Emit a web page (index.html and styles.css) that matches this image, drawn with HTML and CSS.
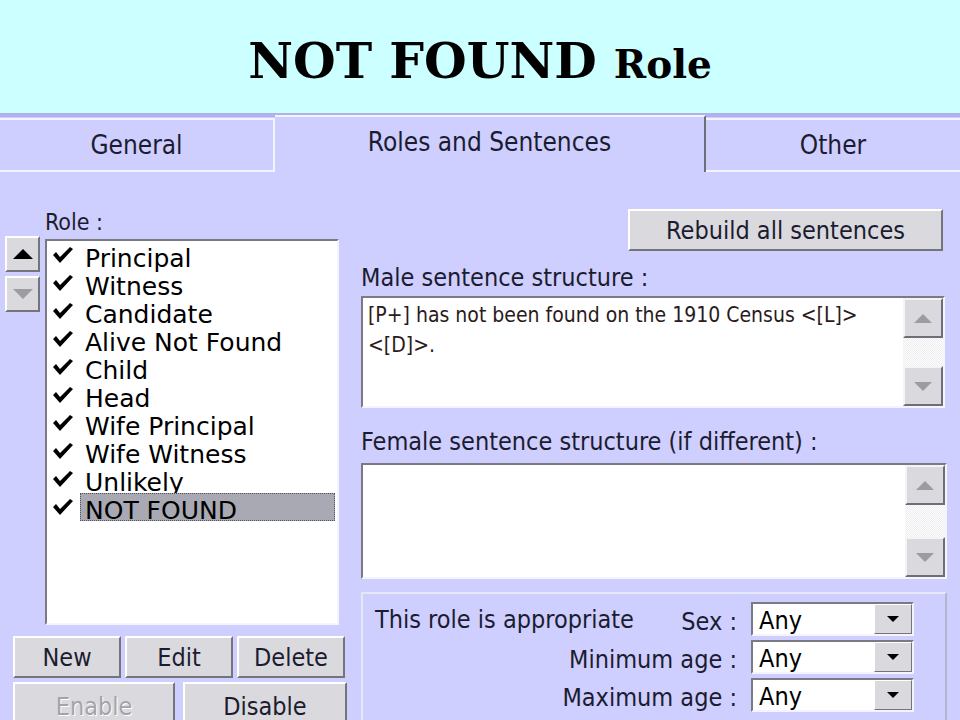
FILE: index.html
```html
<!DOCTYPE html>
<html lang="en">
<head>
  <meta charset="UTF-8" />
  <title>NOT FOUND Role</title>
  <link rel="stylesheet" href="styles.css">
</head>
<body>
  <header class="title-band">
    <h1>NOT FOUND <span class="title-small">Role</span></h1>
  </header>

  <nav class="tabs">
    <div class="tab">General</div>
    <div class="tab active">Roles and Sentences</div>
    <div class="tab last">Other</div>
  </nav>

  <main class="panel">
    <section class="roles">
      <div class="field-label role-label">Role :</div>
      <div class="roles-row">
        <div class="move-btns">
          <button class="win-btn move"><span class="tri tri-up"></span></button>
          <button class="win-btn move" disabled><span class="tri tri-down dim"></span></button>
        </div>
        <ul class="listbox">
          <li><svg class="check" viewBox="0 0 20 16"><polygon points="0,8 3,5 7,10 17,0 20,2 7,16"/></svg><span>Principal</span></li>
          <li><svg class="check" viewBox="0 0 20 16"><polygon points="0,8 3,5 7,10 17,0 20,2 7,16"/></svg><span>Witness</span></li>
          <li><svg class="check" viewBox="0 0 20 16"><polygon points="0,8 3,5 7,10 17,0 20,2 7,16"/></svg><span>Candidate</span></li>
          <li><svg class="check" viewBox="0 0 20 16"><polygon points="0,8 3,5 7,10 17,0 20,2 7,16"/></svg><span>Alive Not Found</span></li>
          <li><svg class="check" viewBox="0 0 20 16"><polygon points="0,8 3,5 7,10 17,0 20,2 7,16"/></svg><span>Child</span></li>
          <li><svg class="check" viewBox="0 0 20 16"><polygon points="0,8 3,5 7,10 17,0 20,2 7,16"/></svg><span>Head</span></li>
          <li><svg class="check" viewBox="0 0 20 16"><polygon points="0,8 3,5 7,10 17,0 20,2 7,16"/></svg><span>Wife Principal</span></li>
          <li><svg class="check" viewBox="0 0 20 16"><polygon points="0,8 3,5 7,10 17,0 20,2 7,16"/></svg><span>Wife Witness</span></li>
          <li><svg class="check" viewBox="0 0 20 16"><polygon points="0,8 3,5 7,10 17,0 20,2 7,16"/></svg><span>Unlikely</span></li>
          <li class="selected"><svg class="check" viewBox="0 0 20 16"><polygon points="0,8 3,5 7,10 17,0 20,2 7,16"/></svg><span>NOT FOUND</span></li>
        </ul>
      </div>
      <div class="btn-row three">
        <button class="win-btn">New</button>
        <button class="win-btn">Edit</button>
        <button class="win-btn">Delete</button>
      </div>
      <div class="btn-row two">
        <button class="win-btn" disabled>Enable</button>
        <button class="win-btn">Disable</button>
      </div>
    </section>

    <section class="sentences">
      <div class="rebuild-row">
        <button class="win-btn rebuild">Rebuild all sentences</button>
      </div>

      <div class="field-label male-label">Male sentence structure :</div>
      <div class="textbox male">
        <div class="textbox-text">[P+] has not been found on the 1910 Census &lt;[L]&gt;<br>&lt;[D]&gt;.</div>
        <div class="vscroll">
          <div class="scroll-btn"><span class="tri tri-up small dim"></span></div>
          <div class="scroll-track"></div>
          <div class="scroll-btn"><span class="tri tri-down small dim"></span></div>
        </div>
      </div>

      <div class="field-label female-label">Female sentence structure (if different) :</div>
      <div class="textbox female">
        <div class="textbox-text"></div>
        <div class="vscroll">
          <div class="scroll-btn"><span class="tri tri-up small dim"></span></div>
          <div class="scroll-track"></div>
          <div class="scroll-btn"><span class="tri tri-down small dim"></span></div>
        </div>
      </div>

      <div class="group">
        <div class="group-desc">This role is appropriate</div>
        <div class="combo-label">Sex :</div>
        <div class="combo"><span class="combo-value">Any</span><span class="combo-btn"><span class="tri tri-down tiny"></span></span></div>

        <div class="combo-label wide">Minimum age :</div>
        <div class="combo"><span class="combo-value">Any</span><span class="combo-btn"><span class="tri tri-down tiny"></span></span></div>

        <div class="combo-label wide">Maximum age :</div>
        <div class="combo"><span class="combo-value">Any</span><span class="combo-btn"><span class="tri tri-down tiny"></span></span></div>
      </div>
    </section>
  </main>
</body>
</html>
```

FILE: styles.css
```css
body {
  margin: 0; width: 960px; height: 720px; overflow: hidden;
  background: #ceceff; color: #1c1c30;
  font-family: "DejaVu Sans Condensed", "Liberation Sans", sans-serif;
}

/* slide title */
.title-band {
  height: 113px; background: #ccffff;
  display: flex; justify-content: center; align-items: center;
}
.title-band h1 {
  margin: 8px 0 0; font-family: "DejaVu Serif", serif; font-weight: bold;
  font-size: 49px; color: #000;
}
.title-small { font-size: 39px; }

/* tab strip */
.tabs {
  height: 59px; display: flex; align-items: flex-end;
  background: linear-gradient(#b2b2ea 0, #b2b2ea 4px, #ceceff 4px);
}
.tab {
  box-sizing: border-box; height: 54px; width: 275px;
  border-top: 2px solid #f4f4ff; border-right: 2px solid #f4f4ff; border-bottom: 2px solid #f4f4ff;
  display: flex; justify-content: center; align-items: center;
  font-size: 26px; padding-top: 0;
}
.tab.active {
  width: 431px; height: 57px; border-bottom: none; border-right: 2px solid #6e6e78;
  padding-bottom: 6px;
}
.tab.last { flex: 1; border-right: none; }

.panel { display: grid; grid-template-columns: 350px 1fr; }

.field-label { font-size: 25px; line-height: 30px; }

/* left column */
.role-label { font-size: 23px; line-height: 28px; margin: 36px 0 0 45px; }
.roles-row { display: flex; }
.move-btns { display: flex; flex-direction: column; gap: 4px; margin-left: 5px; }

.win-btn {
  box-sizing: border-box; padding: 0; margin: 0;
  background: #dadade; color: #1c1c30; font: inherit; font-size: 25px;
  border: 2px solid; border-color: #ffffff #74747c #74747c #ffffff;
}
.win-btn[disabled] { color: #a4a4a8; text-shadow: 1px 1px 0 #fff; }
.move { width: 35px; height: 36px; display: flex; justify-content: center; align-items: center; }

.tri { display: inline-block; width: 0; height: 0; }
.tri-up { border-left: 10px solid transparent; border-right: 10px solid transparent; border-bottom: 10px solid #000; }
.tri-down { border-left: 10px solid transparent; border-right: 10px solid transparent; border-top: 10px solid #000; }
.tri-up.dim { border-bottom-color: #9c9ca2; }
.tri-down.dim { border-top-color: #9c9ca2; }
.tri.small { border-left-width: 9px; border-right-width: 9px; }
.tri-up.small { border-bottom-width: 9px; }
.tri-down.small { border-top-width: 9px; }
.tri.tiny { border-left-width: 6px; border-right-width: 6px; border-top-width: 6px; }

.listbox {
  box-sizing: border-box; width: 294px; height: 386px; margin: 3px 0 0 5px; padding: 0;
  list-style: none; background: #fff;
  border: 2px solid; border-color: #7a7a82 #f4f4ff #f4f4ff #7a7a82;
  font-family: "DejaVu Sans", sans-serif; font-size: 25px; color: #000;
}
.listbox li {
  box-sizing: border-box; height: 28px;
  display: flex; align-items: flex-start; padding: 0 2px 0 6px;
}
.check { width: 20px; height: 16px; margin: 6px 7px 0 0; flex: none; }
.listbox li span {
  flex: 1; box-sizing: border-box; height: 28px; padding: 4px 0 0 5px;
  line-height: 28px; white-space: nowrap;
}
.listbox li.selected span {
  background: #a9a9b3; outline: 1px dotted #505058; outline-offset: -1px;
}

.btn-row { display: grid; margin-left: 13px; }
.btn-row.three { grid-template-columns: repeat(3, 108px); gap: 4px; margin-top: 11px; }
.btn-row.three .win-btn { height: 42px; }
.btn-row.two { grid-template-columns: 162px 164px; gap: 8px; margin-top: 4px; }
.btn-row.two .win-btn { height: 44px; padding-top: 4px; }

/* right column */
.sentences { display: flex; flex-direction: column; margin-left: 11px; width: 586px; }
.rebuild-row { display: flex; justify-content: flex-end; margin: 37px 4px 0 0; }
.rebuild { width: 315px; height: 42px; }
.male-label { margin-top: 12px; }
.female-label { margin-top: 19px; }

.textbox {
  box-sizing: border-box; display: flex; background: #fff;
  border: 2px solid; border-color: #7a7a82 #f4f4ff #f4f4ff #7a7a82;
}
.textbox.male { width: 584px; height: 112px; margin-top: 3px; }
.textbox.female { width: 586px; height: 116px; margin-top: 6px; }
.textbox-text {
  flex: 1; padding: 2px 5px; font-size: 21px; line-height: 30px; color: #2a1a20;
}
.vscroll { width: 40px; display: flex; flex-direction: column; }
.scroll-btn {
  box-sizing: border-box; height: 40px; background: #dadade;
  border: 2px solid; border-color: #f4f4f6 #6e6e76 #6e6e76 #f4f4f6;
  display: flex; justify-content: center; align-items: center;
}
.scroll-track {
  flex: 1;
  background: repeating-conic-gradient(#ececee 0 25%, #ffffff 0 50%) 0 0 / 2px 2px;
}

.group {
  box-sizing: border-box; width: 586px; height: 140px; margin-top: 13px;
  border: 2px solid; border-color: #e6e6f6 #b4b4cc #b4b4cc #e6e6f6;
  display: grid; grid-template-columns: 1fr auto 163px; grid-auto-rows: 34px;
  row-gap: 4px; column-gap: 14px; padding: 8px 31px 0 12px;
}
.group-desc { font-size: 25px; line-height: 30px; padding-top: 3px; }
.combo-label { font-size: 25px; line-height: 30px; padding-top: 5px; text-align: right; }
.combo-label.wide { grid-column: 1 / 3; }
.combo {
  box-sizing: border-box; display: flex; background: #fff;
  border: 2px solid; border-color: #7a7a82 #f4f4ff #f4f4ff #7a7a82;
}
.combo-value { flex: 1; font-size: 25px; line-height: 27px; padding: 3px 0 0 6px; color: #000; }
.combo-btn {
  box-sizing: border-box; width: 38px; background: #dadade;
  border: 1px solid; border-color: #ffffff #74747c #74747c #ffffff;
  display: flex; justify-content: center; align-items: center;
}
```
